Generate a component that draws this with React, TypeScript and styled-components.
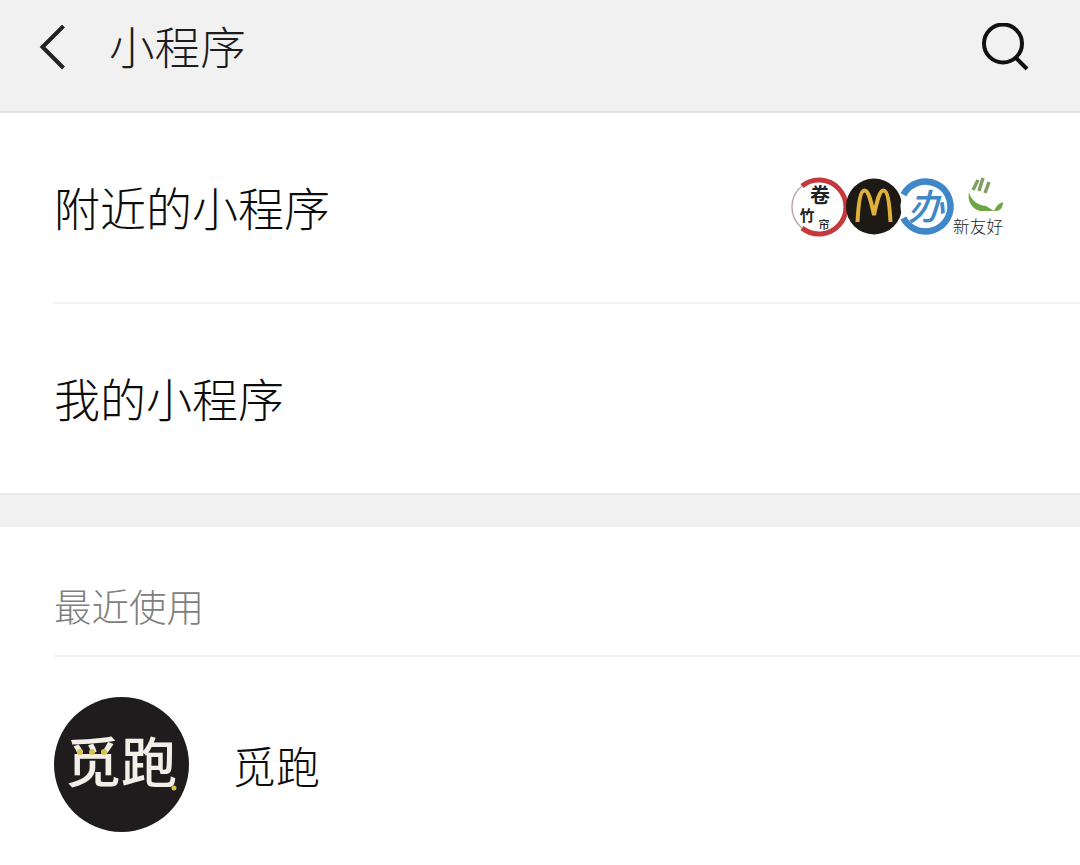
import React, { FC } from 'react';
import styled, { createGlobalStyle } from 'styled-components';

const GlobalStyle = createGlobalStyle`
  html, body {
    margin: 0;
    padding: 0;
    background: #fff;
  }
  body {
    font-family: "Noto Sans CJK SC", "Liberation Sans", sans-serif;
    overflow: hidden;
  }
`;

const cjk = 'Noto Sans CJK SC, sans-serif';

const Page = styled.div`
  width: 1080px;
  height: 865px;
  overflow: hidden;
  background: #fff;
  color: #111;
`;

const Header = styled.header`
  height: 95px;
  background: #f1f1f1;
  border-bottom: 2px solid #e2e2e2;
  display: flex;
  align-items: center;
  padding: 0 50px 16px 38px;
`;

const BackButton = styled.svg`
  width: 32px;
  height: 46px;
  flex: none;
`;

const Title = styled.h1`
  margin: 0 0 5px 39px;
  font-size: 45.6px;
  line-height: 60px;
  font-weight: 300;
  color: #1c1c1c;
  flex: 1;
`;

const SearchButton = styled.svg`
  width: 50px;
  height: 50px;
  flex: none;
`;

const Row = styled.div`
  height: 189px;
  margin-left: 54px;
  display: flex;
  align-items: center;
  justify-content: space-between;
  font-size: 46px;
  font-weight: 300;
  color: #0c0c0c;
  padding-bottom: 3px;
  box-sizing: border-box;
`;

const Divider = styled.div`
  height: 2px;
  background: #f3f3f3;
  margin-left: 54px;
`;

const LogoStrip = styled.svg`
  width: 220px;
  height: 70px;
  margin: 3px 72px 0 0;
  flex: none;
`;

const Band = styled.div`
  height: 32px;
  background: #f1f1f1;
  border-top: 2px solid #e9e9e9;
`;

const SectionHead = styled.div`
  height: 128px;
  margin-left: 54px;
  display: flex;
  align-items: flex-end;
  padding-bottom: 22px;
  box-sizing: border-box;
  font-size: 37.5px;
  line-height: 56px;
  font-weight: 300;
  color: #808080;
`;

const AppRow = styled.div`
  display: flex;
  align-items: center;
  margin: 40px 0 0 54px;
  gap: 43px;
`;

const Avatar = styled.svg`
  width: 135px;
  height: 135px;
  flex: none;
`;

const AppName = styled.span`
  font-size: 44px;
  font-weight: 300;
  color: #0c0c0c;
`;

const Logos: FC = () => (
  <LogoStrip viewBox="0 0 220 70">
    {/* brush ring */}
    <path d="M14 55 A27 27 0 1 0 14 13" fill="none" stroke="#c5383b" strokeWidth="5" />
    <path d="M14 13 A27 27 0 0 0 14 55" fill="none" stroke="#bfa6a6" strokeWidth="1.5" />
    <text x="32" y="30" fontSize="20" fontWeight="700" textAnchor="middle" fontFamily={cjk} fill="#222">卷</text>
    <text x="19" y="48" fontSize="15" fontWeight="700" textAnchor="middle" fontFamily={cjk} fill="#222">竹</text>
    <text x="36" y="56" fontSize="11" fontWeight="500" textAnchor="middle" fontFamily={cjk} fill="#222">帘</text>
    {/* arches */}
    <circle cx="86" cy="33.5" r="28" fill="#1d1a16" />
    <path d="M69.5 49 C70.5 30 72.5 17.5 76.5 17.5 C81 17.5 83.5 31 86 42 C88.5 31 91 17.5 95.5 17.5 C99.5 17.5 101.5 30 102.5 49" fill="none" stroke="#e0b13a" strokeWidth="4" />
    {/* blue ring */}
    <circle cx="137.5" cy="33.5" r="25" fill="#fff" stroke="#3f87c6" strokeWidth="6.5" strokeDasharray="132 25" transform="rotate(208 137.5 33.5)" />
    <text x="138" y="47" fontSize="36" fontWeight="500" fontStyle="italic" textAnchor="middle" fontFamily={cjk} fill="#3f87c6">办</text>
    {/* leaf */}
    <path d="M181 19 C183 28 190 32 198 33 L206 38 L192 38 C184 36 179 28 181 19 Z" fill="#6da544" />
    <path d="M206 38 C208 33 211 30 215 29 C215 33 213 38 208 38 Z" fill="#6da544" />
    <path d="M185 17 L190 7 M191 18 L195 5 M197 20 L201 9" stroke="#7f9f62" strokeWidth="3.5" fill="none" />
    <text x="165" y="60" fontSize="16.5" textLength="50" fontFamily={cjk} fill="#222">新友好</text>
  </LogoStrip>
);

const App: FC = () => (
  <Page>
    <GlobalStyle />
    <Header>
      <BackButton viewBox="0 0 32 46">
        <path d="M25.5 1 L4.5 22 L25.5 43" fill="none" stroke="#222" strokeWidth="4" />
      </BackButton>
      <Title>小程序</Title>
      <SearchButton viewBox="0 0 50 50">
        <circle cx="23" cy="20.5" r="19" fill="none" stroke="#111" strokeWidth="4" />
        <path d="M35.5 34.5 L47 46" stroke="#111" strokeWidth="4" />
      </SearchButton>
    </Header>
    <Row>
      附近的小程序
      <Logos />
    </Row>
    <Divider />
    <Row>我的小程序</Row>
    <Band />
    <SectionHead>最近使用</SectionHead>
    <Divider />
    <AppRow>
      <Avatar viewBox="0 0 135 135">
        <circle cx="67.5" cy="67.5" r="67.5" fill="#1e1c1d" />
        <text x="11" y="86" fontSize="54" fontWeight="500" textLength="112" lengthAdjust="spacingAndGlyphs" fontFamily={cjk} fill="#f1efe8">觅跑</text>
        <circle cx="26" cy="55" r="3" fill="#d8c44a" />
        <circle cx="38" cy="55" r="3" fill="#d8c44a" />
        <circle cx="50" cy="55" r="3" fill="#d8c44a" />
        <circle cx="120" cy="91" r="2.5" fill="#d8c44a" />
      </Avatar>
      <AppName>觅跑</AppName>
    </AppRow>
  </Page>
);

export default App;
